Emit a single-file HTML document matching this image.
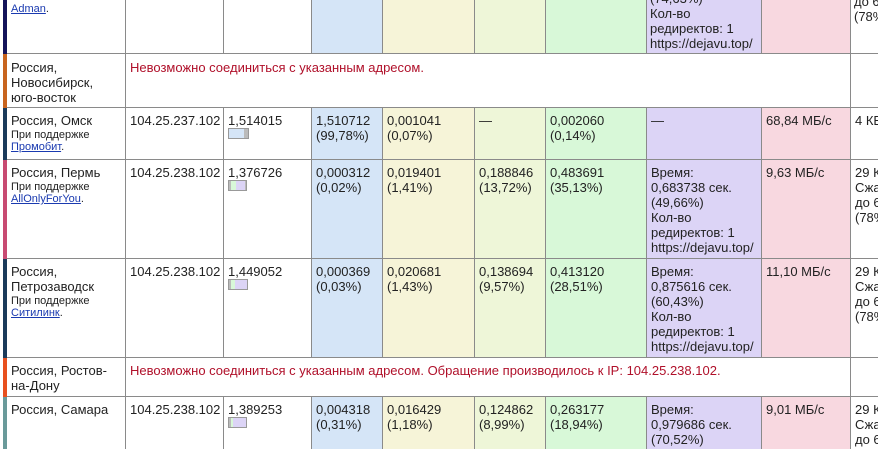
<!DOCTYPE html>
<html><head><meta charset="utf-8">
<style>
*{margin:0;padding:0;box-sizing:border-box}
body{width:878px;height:449px;overflow:hidden;background:#fff;position:relative;font-family:"Liberation Sans",Arial,sans-serif;font-size:13px;line-height:15px;color:#222}
.a{position:absolute}
.t{position:absolute;padding:2px 4px;white-space:nowrap}
.s{display:block;font-size:11px;line-height:12px;margin-top:1px}
a{color:#1a3ab0;text-decoration:underline}
.v{position:absolute;width:1px;background:#8a8a8a}
.h{position:absolute;height:1px;background:#8a8a8a;left:7px;width:871px}
.err{color:#b0102a}
.bar{position:absolute;height:11px;border:1px solid #999;background:#bbb;display:flex}
</style></head><body>
<div class="a" style="left:311px;top:0;width:71px;height:54px;background:#d5e5f7"></div>
<div class="a" style="left:382px;top:0;width:92px;height:54px;background:#f6f4d8"></div>
<div class="a" style="left:474px;top:0;width:71px;height:54px;background:#eef6d8"></div>
<div class="a" style="left:545px;top:0;width:101px;height:54px;background:#d8f8d8"></div>
<div class="a" style="left:646px;top:0;width:115px;height:54px;background:#dcd4f6"></div>
<div class="a" style="left:761px;top:0;width:89px;height:54px;background:#f8d8e0"></div>

<div class="a" style="left:311px;top:108px;width:71px;height:250px;background:#d5e5f7"></div>
<div class="a" style="left:382px;top:108px;width:92px;height:250px;background:#f6f4d8"></div>
<div class="a" style="left:474px;top:108px;width:71px;height:250px;background:#eef6d8"></div>
<div class="a" style="left:545px;top:108px;width:101px;height:250px;background:#d8f8d8"></div>
<div class="a" style="left:646px;top:108px;width:115px;height:250px;background:#dcd4f6"></div>
<div class="a" style="left:761px;top:108px;width:89px;height:250px;background:#f8d8e0"></div>

<div class="a" style="left:311px;top:397px;width:71px;height:52px;background:#d5e5f7"></div>
<div class="a" style="left:382px;top:397px;width:92px;height:52px;background:#f6f4d8"></div>
<div class="a" style="left:474px;top:397px;width:71px;height:52px;background:#eef6d8"></div>
<div class="a" style="left:545px;top:397px;width:101px;height:52px;background:#d8f8d8"></div>
<div class="a" style="left:646px;top:397px;width:115px;height:52px;background:#dcd4f6"></div>
<div class="a" style="left:761px;top:397px;width:89px;height:52px;background:#f8d8e0"></div>

<div class="a" style="left:3px;top:0;width:4px;height:54px;background:#14145a"></div>
<div class="a" style="left:3px;top:54px;width:4px;height:54px;background:#c8641e"></div>
<div class="a" style="left:3px;top:108px;width:4px;height:52px;background:#1a3a5a"></div>
<div class="a" style="left:3px;top:160px;width:4px;height:99px;background:#c84a72"></div>
<div class="a" style="left:3px;top:259px;width:4px;height:99px;background:#1a3a5a"></div>
<div class="a" style="left:3px;top:358px;width:4px;height:39px;background:#e8501e"></div>
<div class="a" style="left:3px;top:397px;width:4px;height:52px;background:#6a9a9a"></div>

<div class="h" style="top:53px"></div>
<div class="h" style="top:107px"></div>
<div class="h" style="top:159px"></div>
<div class="h" style="top:258px"></div>
<div class="h" style="top:357px"></div>
<div class="h" style="top:396px"></div>

<div class="v" style="left:125px;top:0;height:54px"></div>
<div class="v" style="left:223px;top:0;height:54px"></div>
<div class="v" style="left:311px;top:0;height:54px"></div>
<div class="v" style="left:382px;top:0;height:54px"></div>
<div class="v" style="left:474px;top:0;height:54px"></div>
<div class="v" style="left:545px;top:0;height:54px"></div>
<div class="v" style="left:646px;top:0;height:54px"></div>
<div class="v" style="left:761px;top:0;height:54px"></div>
<div class="v" style="left:850px;top:0;height:449px"></div>
<div class="v" style="left:125px;top:54px;height:54px"></div>
<div class="v" style="left:125px;top:358px;height:39px"></div>
<div class="v" style="left:125px;top:108px;height:250px"></div>
<div class="v" style="left:223px;top:108px;height:250px"></div>
<div class="v" style="left:311px;top:108px;height:250px"></div>
<div class="v" style="left:382px;top:108px;height:250px"></div>
<div class="v" style="left:474px;top:108px;height:250px"></div>
<div class="v" style="left:545px;top:108px;height:250px"></div>
<div class="v" style="left:646px;top:108px;height:250px"></div>
<div class="v" style="left:761px;top:108px;height:250px"></div>
<div class="v" style="left:125px;top:397px;height:52px"></div>
<div class="v" style="left:223px;top:397px;height:52px"></div>
<div class="v" style="left:311px;top:397px;height:52px"></div>
<div class="v" style="left:382px;top:397px;height:52px"></div>
<div class="v" style="left:474px;top:397px;height:52px"></div>
<div class="v" style="left:545px;top:397px;height:52px"></div>
<div class="v" style="left:646px;top:397px;height:52px"></div>
<div class="v" style="left:761px;top:397px;height:52px"></div>

<div class="t" style="left:7px;top:0px"><span class="s"><a>Adman</a>.</span></div>
<div class="t" style="left:646px;top:-11px">(74,63%)<br>Кол-во<br>редиректов: 1<br>https://dejavu.top/</div>
<div class="t" style="left:850px;top:-8px">до 6<br>(78%</div>

<div class="t" style="left:7px;top:58px">Россия,<br>Новосибирск,<br>юго-восток</div>
<div class="t err" style="left:126px;top:58px">Невозможно соединиться с указанным адресом.</div>

<div class="t" style="left:7px;top:111px">Россия, Омск<span class="s">При поддержке<br><a>Промобит</a>.</span></div>
<div class="t" style="left:126px;top:111px">104.25.237.102</div>
<div class="t" style="left:224px;top:111px">1,514015</div>
<div class="bar" style="left:228px;top:128px;width:21px"><div style="width:15px;background:#d5e5f7"></div></div>
<div class="t" style="left:312px;top:111px">1,510712<br>(99,78%)</div>
<div class="t" style="left:383px;top:111px">0,001041<br>(0,07%)</div>
<div class="t" style="left:475px;top:111px">—</div>
<div class="t" style="left:546px;top:111px">0,002060<br>(0,14%)</div>
<div class="t" style="left:647px;top:111px">—</div>
<div class="t" style="left:762px;top:111px">68,84 МБ/с</div>
<div class="t" style="left:851px;top:111px">4 КБ</div>

<div class="t" style="left:7px;top:163px">Россия, Пермь<span class="s">При поддержке<br><a>AllOnlyForYou</a>.</span></div>
<div class="t" style="left:126px;top:163px">104.25.238.102</div>
<div class="t" style="left:224px;top:163px">1,376726</div>
<div class="bar" style="left:228px;top:180px;width:19px"><div style="width:2px;background:#bbb"></div><div style="width:5px;background:#d8f8d8"></div><div style="width:9px;background:#dcd4f6"></div></div>
<div class="t" style="left:312px;top:163px">0,000312<br>(0,02%)</div>
<div class="t" style="left:383px;top:163px">0,019401<br>(1,41%)</div>
<div class="t" style="left:475px;top:163px">0,188846<br>(13,72%)</div>
<div class="t" style="left:546px;top:163px">0,483691<br>(35,13%)</div>
<div class="t" style="left:647px;top:163px">Время:<br>0,683738 сек.<br>(49,66%)<br>Кол-во<br>редиректов: 1<br>https://dejavu.top/</div>
<div class="t" style="left:762px;top:163px">9,63 МБ/с</div>
<div class="t" style="left:851px;top:163px">29 КБ<br>Сжато<br>до 6<br>(78%</div>

<div class="t" style="left:7px;top:262px">Россия,<br>Петрозаводск<span class="s">При поддержке<br><a>Ситилинк</a>.</span></div>
<div class="t" style="left:126px;top:262px">104.25.238.102</div>
<div class="t" style="left:224px;top:262px">1,449052</div>
<div class="bar" style="left:228px;top:279px;width:20px"><div style="width:2px;background:#bbb"></div><div style="width:4px;background:#d8f8d8"></div><div style="width:12px;background:#dcd4f6"></div></div>
<div class="t" style="left:312px;top:262px">0,000369<br>(0,03%)</div>
<div class="t" style="left:383px;top:262px">0,020681<br>(1,43%)</div>
<div class="t" style="left:475px;top:262px">0,138694<br>(9,57%)</div>
<div class="t" style="left:546px;top:262px">0,413120<br>(28,51%)</div>
<div class="t" style="left:647px;top:262px">Время:<br>0,875616 сек.<br>(60,43%)<br>Кол-во<br>редиректов: 1<br>https://dejavu.top/</div>
<div class="t" style="left:762px;top:262px">11,10 МБ/с</div>
<div class="t" style="left:851px;top:262px">29 КБ<br>Сжато<br>до 6<br>(78%</div>

<div class="t" style="left:7px;top:361px">Россия, Ростов-<br>на-Дону</div>
<div class="t err" style="left:126px;top:361px">Невозможно соединиться с указанным адресом. Обращение производилось к IP: 104.25.238.102.</div>

<div class="t" style="left:7px;top:400px">Россия, Самара</div>
<div class="t" style="left:126px;top:400px">104.25.238.102</div>
<div class="t" style="left:224px;top:400px">1,389253</div>
<div class="bar" style="left:228px;top:417px;width:19px"><div style="width:2px;background:#bbb"></div><div style="width:2px;background:#d8f8d8"></div><div style="width:13px;background:#dcd4f6"></div></div>
<div class="t" style="left:312px;top:400px">0,004318<br>(0,31%)</div>
<div class="t" style="left:383px;top:400px">0,016429<br>(1,18%)</div>
<div class="t" style="left:475px;top:400px">0,124862<br>(8,99%)</div>
<div class="t" style="left:546px;top:400px">0,263177<br>(18,94%)</div>
<div class="t" style="left:647px;top:400px">Время:<br>0,979686 сек.<br>(70,52%)</div>
<div class="t" style="left:762px;top:400px">9,01 МБ/с</div>
<div class="t" style="left:851px;top:400px">29 КБ<br>Сжато<br>до 6</div>
</body></html>
